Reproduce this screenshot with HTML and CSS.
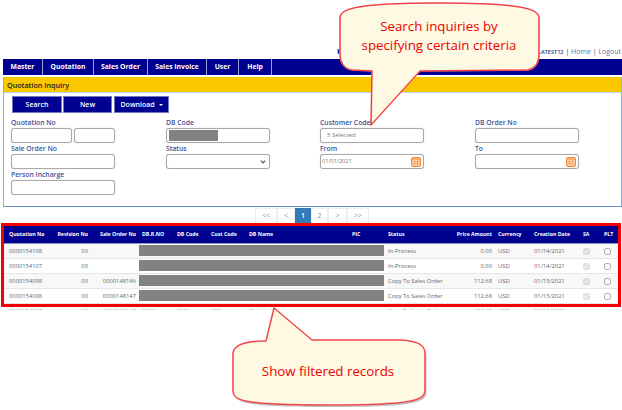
FILE: index.html
```html
<!DOCTYPE html>
<html lang="en">
<head>
    <meta charset="UTF-8">
    <meta name="viewport" content="width=device-width, initial-scale=1.0">
    <title>Quotation Inquiry</title>
    <link rel="stylesheet" href="styles.css">
</head>
<body>
    <div class="page">
        <div class="topline">
            <span class="user-first">K</span>
            <span class="user-links"><b>XLATEST12</b> | <a>Home</a> | <a>Logout</a></span>
        </div>
        <ul class="nav">
            <li class="nav-master">Master</li>
            <li class="nav-quotation">Quotation</li>
            <li class="nav-order">Sales Order</li>
            <li class="nav-invoice">Sales Invoice</li>
            <li class="nav-user">User</li>
            <li class="nav-help">Help</li>
        </ul>
        <div class="panel">
            <div class="panel-title">Quotation Inquiry</div>
            <div class="panel-body">
                <div class="actions">
                    <button class="btn btn-search">Search</button>
                    <button class="btn btn-new">New</button>
                    <button class="btn btn-download">Download <i class="caret"></i></button>
                </div>
                <div class="form-grid">
                    <div class="field">
                        <label>Quotation No</label>
                        <div class="pair">
                            <input type="text" class="input input-a">
                            <input type="text" class="input input-b">
                        </div>
                    </div>
                    <div class="field">
                        <label>DB Code</label>
                        <div class="input masked"><span class="mask"></span></div>
                    </div>
                    <div class="field">
                        <label>Customer Code</label>
                        <div class="input selected">5 Selected</div>
                    </div>
                    <div class="field">
                        <label>DB Order No</label>
                        <input type="text" class="input">
                    </div>
                    <div class="field">
                        <label>Sale Order No</label>
                        <input type="text" class="input">
                    </div>
                    <div class="field">
                        <label>Status</label>
                        <select class="input status-select"></select>
                    </div>
                    <div class="field">
                        <label>From</label>
                        <div class="input date">01/01/2021
                            <svg class="cal" viewBox="0 0 10 10"><rect x="0.5" y="0.5" width="9" height="9" rx="1.5" fill="#fbb173" stroke="#f08a35"/><rect x="1.5" y="3" width="7" height="5.5" fill="#fde0c4"/><path d="M2 4.5h6M2 6.5h6M3.5 3v5.5M6.5 3v5.5" stroke="#f29a50" stroke-width="0.7"/></svg>
                        </div>
                    </div>
                    <div class="field">
                        <label>To</label>
                        <div class="input date">
                            <svg class="cal" viewBox="0 0 10 10"><rect x="0.5" y="0.5" width="9" height="9" rx="1.5" fill="#fbb173" stroke="#f08a35"/><rect x="1.5" y="3" width="7" height="5.5" fill="#fde0c4"/><path d="M2 4.5h6M2 6.5h6M3.5 3v5.5M6.5 3v5.5" stroke="#f29a50" stroke-width="0.7"/></svg>
                        </div>
                    </div>
                    <div class="field">
                        <label>Person Incharge</label>
                        <input type="text" class="input">
                    </div>
                </div>
            </div>
        </div>
        <ul class="pager">
            <li class="pg-first">&lt;&lt;</li>
            <li class="pg-prev">&lt;</li>
            <li class="pg-one active">1</li>
            <li class="pg-two">2</li>
            <li class="pg-next">&gt;</li>
            <li class="pg-last">&gt;&gt;</li>
        </ul>
        <div class="results">
            <div class="results-clip">
                <table class="grid">
                    <colgroup>
                        <col class="c-quote"><col class="c-rev"><col class="c-so"><col class="c-dbr"><col class="c-dbc">
                        <col class="c-cust"><col class="c-name"><col class="c-pic"><col class="c-status"><col class="c-price">
                        <col class="c-cur"><col class="c-date"><col class="c-sa"><col class="c-plt">
                    </colgroup>
                    <thead>
                        <tr>
                            <th>Quotation No</th><th class="num">Revision No</th><th class="num">Sale Order No</th>
                            <th>DB.R.NO</th><th>DB Code</th><th>Cust Code</th><th>DB Name</th><th>PIC</th>
                            <th>Status</th><th class="num">Price Amount</th><th>Currency</th><th>Creation Date</th>
                            <th>SA</th><th>PLT</th>
                        </tr>
                    </thead>
                    <tbody>
                        <tr>
                            <td>0000154108</td><td class="num">00</td><td class="num"></td>
                            <td colspan="5" class="hidden-cell"><div class="bar"></div></td>
                            <td>In-Process</td><td class="num">0.00</td><td>USD</td><td>01/14/2021</td>
                            <td><input type="checkbox" class="chk" checked disabled></td><td><input type="checkbox" class="chk"></td>
                        </tr>
                        <tr>
                            <td>0000154107</td><td class="num">00</td><td class="num"></td>
                            <td colspan="5" class="hidden-cell"><div class="bar"></div></td>
                            <td>In-Process</td><td class="num">0.00</td><td>USD</td><td>01/14/2021</td>
                            <td><input type="checkbox" class="chk" checked disabled></td><td><input type="checkbox" class="chk"></td>
                        </tr>
                        <tr>
                            <td>0000154098</td><td class="num">00</td><td class="num">0000148146</td>
                            <td colspan="5" class="hidden-cell"><div class="bar"></div></td>
                            <td>Copy To Sales Order</td><td class="num">112.68</td><td>USD</td><td>01/13/2021</td>
                            <td><input type="checkbox" class="chk" checked disabled></td><td><input type="checkbox" class="chk"></td>
                        </tr>
                        <tr>
                            <td>0000154098</td><td class="num">00</td><td class="num">0000148147</td>
                            <td colspan="5" class="hidden-cell"><div class="bar"></div></td>
                            <td>Copy To Sales Order</td><td class="num">112.68</td><td>USD</td><td>01/13/2021</td>
                            <td><input type="checkbox" class="chk" checked disabled></td><td><input type="checkbox" class="chk"></td>
                        </tr>
                        <tr class="row-cut">
                            <td>0000154097</td><td class="num">00</td><td class="num">0000148145</td>
                            <td>1000</td><td>3011</td><td>100</td><td>Distributor</td><td></td>
                            <td>Copy To Sales Order</td><td class="num">112.68</td><td>USD</td><td>01/13/2021</td>
                            <td></td><td></td>
                        </tr>
                    </tbody>
                </table>
            </div>
            <div class="red-box"></div>
        </div>
    </div>

    <!-- annotation balloons lie over the page -->
    <div class="balloon balloon-top">
        <svg class="balloon-shape" width="210" height="130" viewBox="0 0 210 130">
            <path d="M34 71 L33 125 L82 71 L190 70 C198 68 201 62 201 54 L201 18 C201 10 190 3 100 3 C12 3 2 10 2 18 L2 54 C2 62 6 69 14 70 Z" fill="#fef9e2" stroke="#f98080" stroke-width="1.6"/>
            <path d="M34 71 L33 125 L82 71 L190 70 C198 68 201 62 201 54 L201 18 C201 10 190 3 100 3 C12 3 2 10 2 18 L2 54 C2 62 6 69 14 70 Z" fill="none" stroke="#e8101a" stroke-width="0.7"/>
        </svg>
        <div class="balloon-text top-text">Search inquiries by<br>specifying certain criteria</div>
    </div>
    <div class="balloon balloon-bottom">
        <svg class="balloon-shape" width="200" height="104" viewBox="0 0 200 104">
            <path d="M36 37 L44 4 L82 36 L170 36 C190 37 195 42 195 50 L195 86 C195 96 185 101 100 101 C12 101 3 97 3 86 L3 50 C3 42 12 37 36 37 Z" fill="#8a8a8a" opacity="0.55" transform="translate(1.5 2)"/>
            <path d="M36 37 L44 4 L82 36 L170 36 C190 37 195 42 195 50 L195 86 C195 96 185 101 100 101 C12 101 3 97 3 86 L3 50 C3 42 12 37 36 37 Z" fill="#fef9e2" stroke="#f98080" stroke-width="1.6"/>
            <path d="M36 37 L44 4 L82 36 L170 36 C190 37 195 42 195 50 L195 86 C195 96 185 101 100 101 C12 101 3 97 3 86 L3 50 C3 42 12 37 36 37 Z" fill="none" stroke="#e8101a" stroke-width="0.6"/>
        </svg>
        <div class="balloon-text bottom-text">Show filtered records</div>
    </div>
</body>
</html>
```
FILE: styles.css
```css
* {
    box-sizing: border-box;
}
body {
    margin: 0;
    background: #fff;
    font-family: "Open Sans", sans-serif;
    color: #555;
    overflow: hidden;
}
.page {
    width: 622px;
    height: 410px;
}
.topline {
    height: 59px;
    padding: 46px 1px 0 337px;
    display: flex;
    justify-content: space-between;
    font-size: 7px;
    line-height: 11px;
    color: #223a7a;
}
.user-first {
    font-weight: 700;
    color: #000080;
}
.user-links b {
    font-size: 5.6px;
    font-weight: 600;
}
.user-links a {
    color: #4a76ad;
}
.nav {
    list-style: none;
    margin: 0 0 2px 3px;
    padding: 0;
    height: 16px;
    display: flex;
    background: #000090;
}
.nav li {
    height: 16px;
    line-height: 16px;
    text-align: center;
    color: #fff;
    font-size: 6.8px;
    font-weight: 700;
    border-right: 1px solid #9aa0d8;
}
.nav-master { width: 40px; }
.nav-quotation { width: 51px; }
.nav-order { width: 54px; }
.nav-invoice { width: 59px; }
.nav-user { width: 32px; }
.nav-help { width: 33px; }
.panel {
    margin-left: 3px;
    height: 130px;
    border: 1px solid #8db4dc;
    border-bottom: 1px solid #5f93cc;
    border-top: 0;
}
.panel-title {
    height: 16px;
    line-height: 16px;
    background: #fbc800;
    border-bottom: 1px solid #b9d2ea;
    padding-left: 3px;
    font-size: 7.2px;
    font-weight: 600;
    color: #222;
}
.panel-body {
    padding: 3px 0 0 7px;
}
.actions {
    display: flex;
    gap: 1px;
    margin-left: 1px;
}
.btn {
    height: 17px;
    padding: 0;
    border: 1px solid #6f78c0;
    background: #000090;
    color: #fff;
    font-family: inherit;
    font-size: 7px;
    font-weight: 600;
}
.btn-search { width: 50px; }
.btn-new { width: 49px; margin-right: 1px; }
.btn-download { width: 55px; }
.caret {
    display: inline-block;
    margin-left: 2px;
    vertical-align: middle;
    border-top: 2px solid #fff;
    border-left: 2px solid transparent;
    border-right: 2px solid transparent;
}
.form-grid {
    display: grid;
    grid-template-columns: 155px 154px 155px 104px;
    grid-auto-rows: 26px;
    margin-top: 4px;
}
.field {
    display: flex;
    flex-direction: column;
}
.field label {
    height: 11px;
    line-height: 11px;
    font-size: 6.8px;
    font-weight: 600;
    color: #3c5096;
}
.input {
    display: block;
    width: 104px;
    height: 15px;
    margin: 0;
    padding: 0 6px;
    background: #fff;
    border: 1px solid #a9a9a9;
    border-radius: 3px;
    box-shadow: 0 0 1px #bbb;
    font-family: inherit;
    font-size: 6px;
    line-height: 13px;
    color: #777;
}
.status-select {
    appearance: none;
    background: #fff url("data:image/svg+xml,%3Csvg xmlns='http://www.w3.org/2000/svg' width='6' height='4'%3E%3Cpath d='M.7.7 3 3l2.3-2.3' fill='none' stroke='%23555' stroke-width='1.1'/%3E%3C/svg%3E") no-repeat right 3px center;
}
.pair {
    display: flex;
    gap: 2px;
}
.input-a { width: 61px; }
.input-b { width: 41px; }
.masked {
    padding: 1px 2px;
}
.mask {
    display: block;
    width: 49px;
    height: 11px;
    background: #828282;
}
.date {
    padding: 0 1px;
    display: flex;
    align-items: center;
    justify-content: space-between;
    font-size: 5.6px;
}
.date .cal {
    margin-left: auto;
}
.cal {
    width: 10px;
    height: 10px;
    margin-right: 1px;
}
.pager {
    list-style: none;
    margin: 0 0 0 255px;
    padding: 1px 0 0;
    height: 16px;
    display: flex;
}
.pager li {
    line-height: 14px;
    text-align: center;
    font-size: 7px;
    color: #8a9bb0;
    border: 1px solid #eee;
    border-bottom: 0;
}
.pg-first { width: 22px; }
.pg-prev { width: 18px; }
.pg-one { width: 16px; }
.pg-two { width: 17px; }
.pg-next { width: 19px; }
.pg-last { width: 22px; }
.pager .active {
    background: #337ab7;
    border-color: #337ab7;
    color: #fff;
    font-weight: 600;
}
.results {
    position: relative;
    margin: 3px 0 0 4px;
    width: 614px;
}
.results-clip {
    height: 84px;
    overflow: hidden;
}
.red-box {
    position: absolute;
    left: -3px;
    top: -3px;
    width: 620px;
    height: 84px;
    border: 3px solid #f40000;
}
.grid {
    width: 614px;
    table-layout: fixed;
    border-collapse: collapse;
}
.c-quote { width: 48px; }
.c-rev { width: 39px; }
.c-so { width: 48px; }
.c-dbr { width: 35px; }
.c-dbc { width: 34px; }
.c-cust { width: 38px; }
.c-name { width: 103px; }
.c-pic { width: 36px; }
.c-status { width: 65px; }
.c-price { width: 45px; }
.c-cur { width: 36px; }
.c-date { width: 49px; }
.c-sa { width: 21px; }
.c-plt { width: 17px; }
.grid th {
    height: 17px;
    padding: 0 3px;
    background: #000090;
    border-bottom: 1px solid #8f94c4;
    color: #fff;
    font-size: 5.2px;
    font-weight: 700;
    text-align: left;
    white-space: nowrap;
}
.grid td {
    height: 15px;
    padding: 0 3px;
    border-bottom: 1px solid #e6e6e6;
    font-size: 5.8px;
    color: #666;
    white-space: nowrap;
}
.grid th:first-child,
.grid td:first-child {
    padding-left: 5px;
}
.grid tbody tr:nth-child(odd) {
    background: #f8f8f8;
}
.grid .row-cut td {
    color: #aaa;
}
.grid .num {
    text-align: right;
}
.grid .hidden-cell {
    padding: 0 1px 0 0;
}
.bar {
    height: 11px;
    background: #828282;
}
.chk {
    display: block;
    width: 7px;
    height: 7px;
    margin: 2px 0 0 0;
    opacity: 0.65;
}
.balloon {
    position: absolute;
}
.balloon-top {
    left: 338px;
    top: 0;
    width: 210px;
    height: 130px;
}
.balloon-bottom {
    left: 230px;
    top: 304px;
    width: 200px;
    height: 106px;
}
.balloon-shape {
    display: block;
}
.balloon-text {
    position: absolute;
    left: 0;
    width: 202px;
    text-align: center;
    color: #ee0000;
    font-family: "Open Sans", sans-serif;
    font-size: 13.3px;
    line-height: 19px;
}
.top-text {
    top: 17px;
}
.bottom-text {
    top: 58px;
    left: -3px;
}
```
